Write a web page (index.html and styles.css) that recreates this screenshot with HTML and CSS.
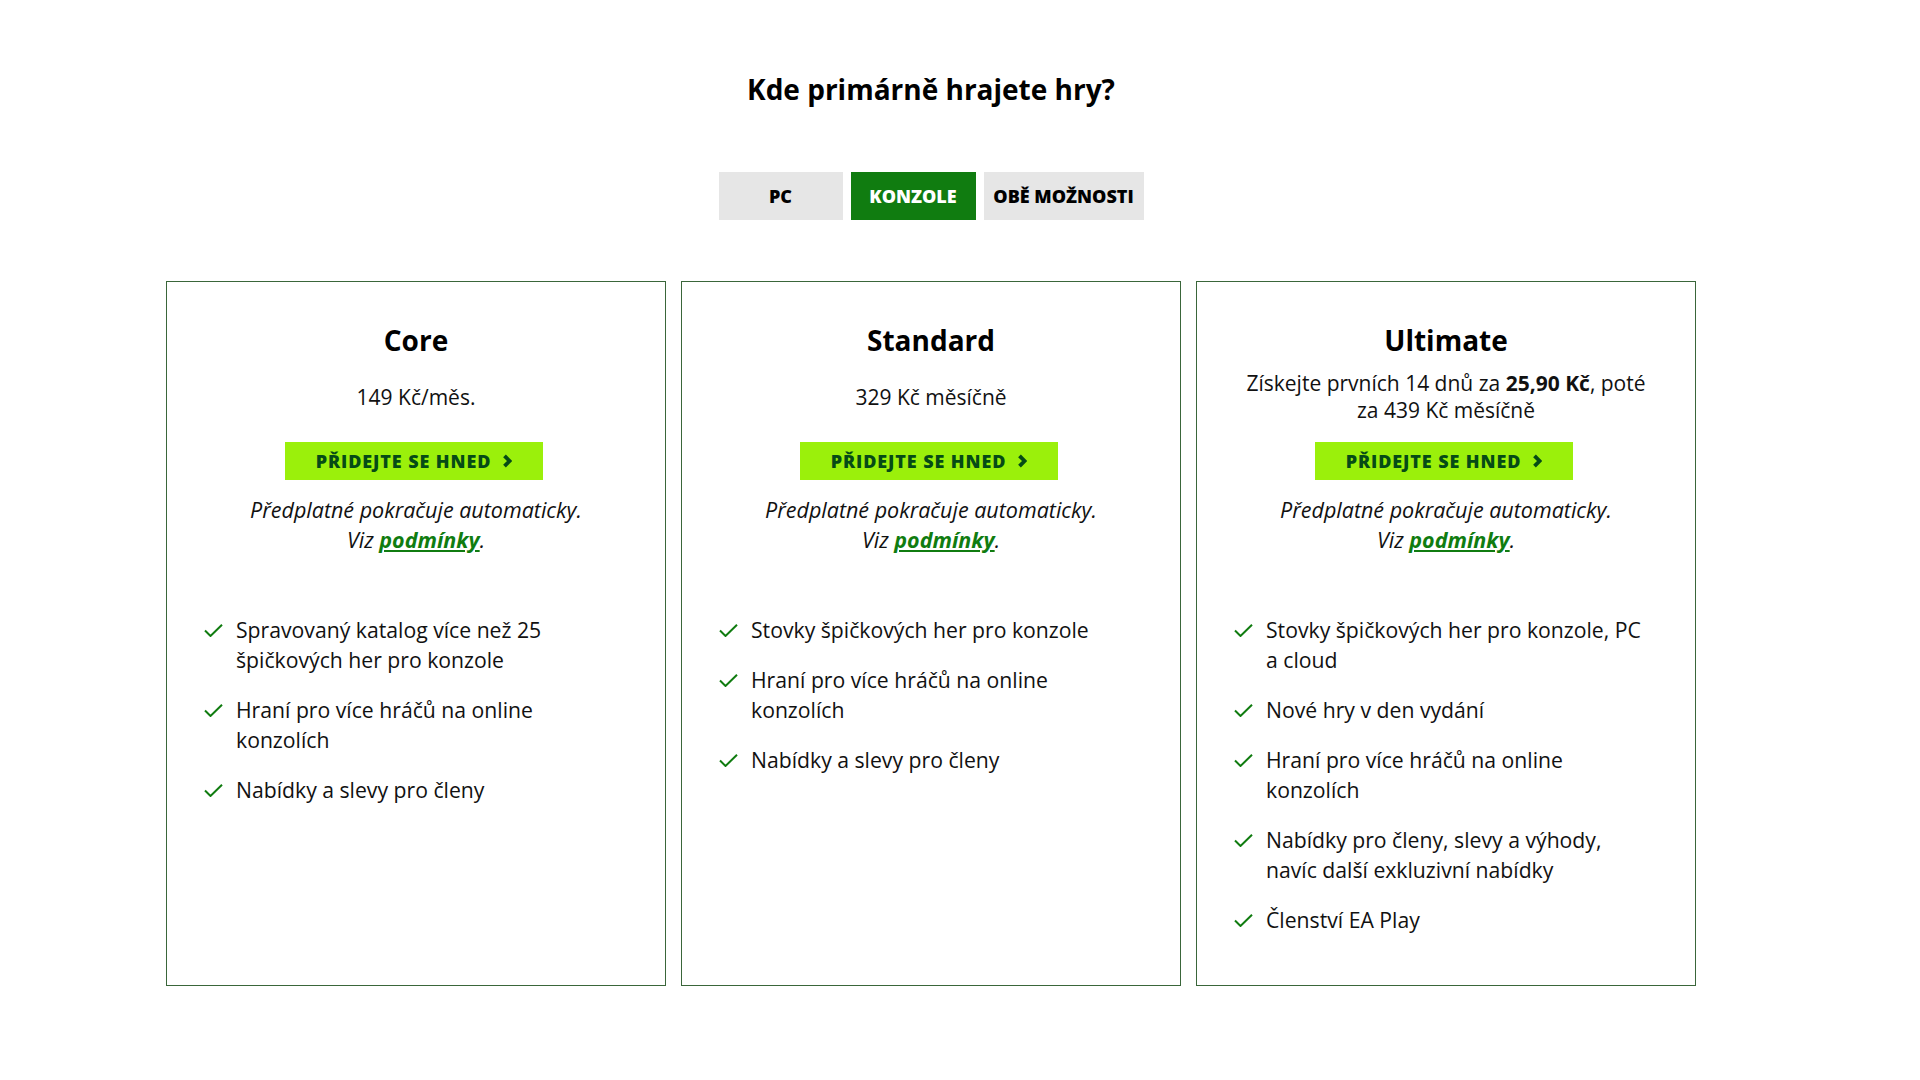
FILE: index.html
```html
<!DOCTYPE html>
<html lang="cs">
<head>
<meta charset="utf-8">
<title>Kde primárně hrajete hry?</title>
<link rel="stylesheet" href="styles.css">
</head>
<body>
<main class="page">
  <h1 class="title">Kde primárně hrajete hry?</h1>
  <div class="tabs">
    <button class="tab tab-pc">PC</button>
    <button class="tab tab-console active">KONZOLE</button>
    <button class="tab tab-both">OBĚ MOŽNOSTI</button>
  </div>
  <div class="plans">
    <section class="card">
      <h2 class="plan-name">Core</h2>
      <div class="price"><p>149 Kč/měs.</p></div>
      <a class="join" href="#">PŘIDEJTE SE HNED <svg class="chev" viewBox="0 0 10 14" width="10" height="14"><path d="M2.5 1.8 L7.6 7 L2.5 12.2" fill="none" stroke="currentColor" stroke-width="3.8"/></svg></a>
      <p class="terms">Předplatné pokračuje automaticky.<br>Viz <a href="#">podmínky</a>.</p>
      <ul class="features">
        <li><svg class="check" viewBox="0 0 19 13" width="19" height="13"><path d="M1 6.5 L6.5 12 L18 0.8" fill="none" stroke="currentColor" stroke-width="2"/></svg><span>Spravovaný katalog více než 25 špičkových her pro konzole</span></li>
        <li><svg class="check" viewBox="0 0 19 13" width="19" height="13"><path d="M1 6.5 L6.5 12 L18 0.8" fill="none" stroke="currentColor" stroke-width="2"/></svg><span>Hraní pro více hráčů na online konzolích</span></li>
        <li><svg class="check" viewBox="0 0 19 13" width="19" height="13"><path d="M1 6.5 L6.5 12 L18 0.8" fill="none" stroke="currentColor" stroke-width="2"/></svg><span>Nabídky a slevy pro členy</span></li>
      </ul>
    </section>
    <section class="card">
      <h2 class="plan-name">Standard</h2>
      <div class="price"><p>329 Kč měsíčně</p></div>
      <a class="join" href="#">PŘIDEJTE SE HNED <svg class="chev" viewBox="0 0 10 14" width="10" height="14"><path d="M2.5 1.8 L7.6 7 L2.5 12.2" fill="none" stroke="currentColor" stroke-width="3.8"/></svg></a>
      <p class="terms">Předplatné pokračuje automaticky.<br>Viz <a href="#">podmínky</a>.</p>
      <ul class="features">
        <li><svg class="check" viewBox="0 0 19 13" width="19" height="13"><path d="M1 6.5 L6.5 12 L18 0.8" fill="none" stroke="currentColor" stroke-width="2"/></svg><span>Stovky špičkových her pro konzole</span></li>
        <li><svg class="check" viewBox="0 0 19 13" width="19" height="13"><path d="M1 6.5 L6.5 12 L18 0.8" fill="none" stroke="currentColor" stroke-width="2"/></svg><span>Hraní pro více hráčů na online konzolích</span></li>
        <li><svg class="check" viewBox="0 0 19 13" width="19" height="13"><path d="M1 6.5 L6.5 12 L18 0.8" fill="none" stroke="currentColor" stroke-width="2"/></svg><span>Nabídky a slevy pro členy</span></li>
      </ul>
    </section>
    <section class="card">
      <h2 class="plan-name">Ultimate</h2>
      <div class="price"><p>Získejte prvních 14 dnů za <b>25,90 Kč</b>, poté<br>za 439 Kč měsíčně</p></div>
      <a class="join" href="#">PŘIDEJTE SE HNED <svg class="chev" viewBox="0 0 10 14" width="10" height="14"><path d="M2.5 1.8 L7.6 7 L2.5 12.2" fill="none" stroke="currentColor" stroke-width="3.8"/></svg></a>
      <p class="terms">Předplatné pokračuje automaticky.<br>Viz <a href="#">podmínky</a>.</p>
      <ul class="features">
        <li><svg class="check" viewBox="0 0 19 13" width="19" height="13"><path d="M1 6.5 L6.5 12 L18 0.8" fill="none" stroke="currentColor" stroke-width="2"/></svg><span>Stovky špičkových her pro konzole, PC a cloud</span></li>
        <li><svg class="check" viewBox="0 0 19 13" width="19" height="13"><path d="M1 6.5 L6.5 12 L18 0.8" fill="none" stroke="currentColor" stroke-width="2"/></svg><span>Nové hry v den vydání</span></li>
        <li><svg class="check" viewBox="0 0 19 13" width="19" height="13"><path d="M1 6.5 L6.5 12 L18 0.8" fill="none" stroke="currentColor" stroke-width="2"/></svg><span>Hraní pro více hráčů na online konzolích</span></li>
        <li><svg class="check" viewBox="0 0 19 13" width="19" height="13"><path d="M1 6.5 L6.5 12 L18 0.8" fill="none" stroke="currentColor" stroke-width="2"/></svg><span>Nabídky pro členy, slevy a výhody, navíc další exkluzivní nabídky</span></li>
        <li><svg class="check" viewBox="0 0 19 13" width="19" height="13"><path d="M1 6.5 L6.5 12 L18 0.8" fill="none" stroke="currentColor" stroke-width="2"/></svg><span>Členství EA Play</span></li>
      </ul>
    </section>
  </div>
</main>
</body>
</html>
```

FILE: styles.css
```css
* { box-sizing: border-box; }
html, body { margin: 0; padding: 0; background: #fff; }
body {
  font-family: "Open Sans", "Noto Sans", "Liberation Sans", sans-serif;
  color: #111;
}
.page {
  width: 1862px;
  display: flex;
  flex-direction: column;
  align-items: center;
  padding-top: 69px;
  padding-bottom: 60px;
}
.title {
  margin: 0;
  font-size: 28px;
  line-height: 40px;
  font-weight: 700;
  color: #000;
}
.tabs {
  display: flex;
  gap: 8px;
  margin-top: 63px;
}
.tab {
  height: 48px;
  border: 0;
  background: #e6e6e6;
  color: #000;
  font-family: inherit;
  font-size: 18px;
  font-weight: 800;
  padding: 0;
  cursor: pointer;
}
.tab-pc { width: 124px; }
.tab-console { width: 125px; }
.tab-both { width: 160px; }
.tab.active { background: #107c10; color: #fff; }

.plans {
  display: grid;
  grid-template-columns: repeat(3, 500px);
  gap: 15px;
  margin-top: 61px;
}
.card {
  border: 1px solid #3a663a;
  display: flex;
  flex-direction: column;
  align-items: center;
  padding: 41px 0 50px;
}
.plan-name {
  margin: 0;
  font-size: 28px;
  line-height: 34px;
  font-weight: 700;
  color: #000;
}
.price {
  margin-top: 13px;
  height: 54px;
  display: flex;
  align-items: center;
  justify-content: center;
  text-align: center;
}
.price p {
  margin: 0;
  font-size: 21px;
  line-height: 27px;
}
.price b { font-weight: 700; }
.join {
  margin-top: 18px;
  margin-right: 4px;
  width: 258px;
  height: 38px;
  background: #9bf00b;
  color: #054b16;
  text-decoration: none;
  font-size: 18px;
  font-weight: 800;
  letter-spacing: 0.9px;
  display: flex;
  align-items: center;
  justify-content: center;
  gap: 11px;
  padding-left: 0;
}
.chev { display: block; }
.terms {
  margin: 15px 0 0;
  font-size: 21.5px;
  line-height: 30px;
  font-style: italic;
  text-align: center;
}
.terms a {
  color: #107c10;
  font-weight: 700;
  text-decoration: underline;
}
.features {
  list-style: none;
  margin: 60px 0 0;
  padding: 0 50px 0 37px;
  align-self: stretch;
  display: flex;
  flex-direction: column;
  gap: 20px;
}
.features li {
  display: flex;
  align-items: flex-start;
  gap: 13px;
  font-size: 21.2px;
  line-height: 30px;
}
.check {
  flex: none;
  color: #107c10;
  margin-top: 9px;
}
```
